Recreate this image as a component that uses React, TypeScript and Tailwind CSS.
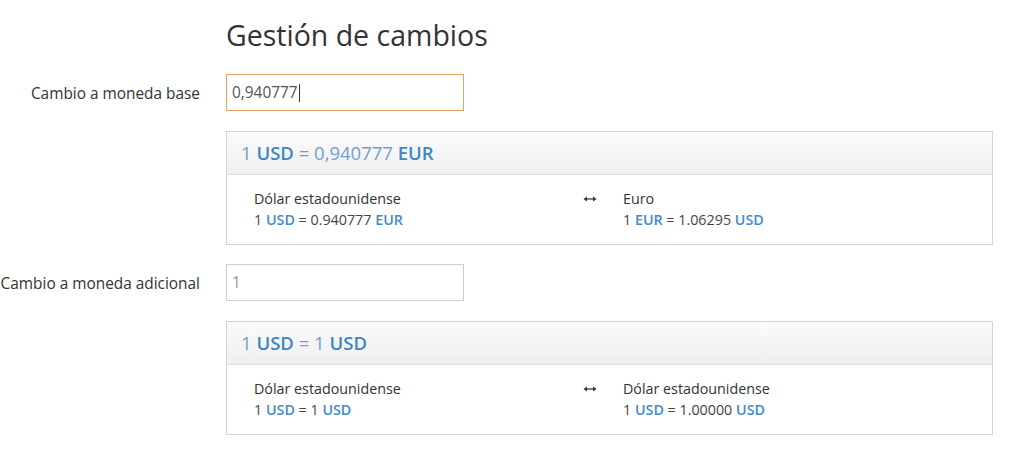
import React from "react";

const Arrow = () => (
  <svg width="14" height="8" viewBox="0 0 14 8" className="mt-[7px]">
    <path d="M0.5 4 L4 1.5 L4 6.5 Z" fill="#333" />
    <path d="M13.5 4 L10 1.5 L10 6.5 Z" fill="#333" />
    <rect x="3" y="3.4" width="8" height="1.2" fill="#333" />
  </svg>
);

const B = ({ children }: { children: React.ReactNode }) => (
  <span className="text-[#428bca] font-semibold">{children}</span>
);

const Panel = ({
  head,
  left,
  right,
}: {
  head: React.ReactNode;
  left: [string, React.ReactNode];
  right: [string, React.ReactNode];
}) => (
  <div className="border border-[#d4d4d4] bg-white">
    <div className="h-[43px] flex items-center pl-[14px] border-b border-[#dcdcdc] bg-gradient-to-b from-[#fbfbfb] to-[#efefef] text-[18.5px] text-[#6f9fce]">
      {head}
    </div>
    <div className="flex pl-[27px] pt-[13px] pb-[14px] text-[14.3px] leading-[21px] text-[#333]">
      <div className="w-[329px]">
        <div>{left[0]}</div>
        <div>{left[1]}</div>
      </div>
      <div className="w-[40px]">
        <Arrow />
      </div>
      <div>
        <div>{right[0]}</div>
        <div>{right[1]}</div>
      </div>
    </div>
  </div>
);

const Row = ({
  one,
  c1,
  val,
  c2,
}: {
  one: string;
  c1: string;
  val: string;
  c2: string;
}) => (
  <span className="text-[#444]">
    {one} <B>{c1}</B> = {val} <B>{c2}</B>
  </span>
);

const Head = ({ c1, val, c2 }: { c1: string; val: string; c2: string }) => (
  <span>
    1 <span className="font-semibold text-[#3f86c5]">{c1}</span> = {val}{" "}
    <span className="font-semibold text-[#3f86c5]">{c2}</span>
  </span>
);

export default function App() {
  return (
    <div
      className="w-[1017px] h-[453px] bg-white overflow-hidden"
      style={{ fontFamily: '"Open Sans", sans-serif' }}
    >
      <div className="pl-[226px] pt-[13px]">
        <h1 className="text-[28.5px] leading-[44px] text-[#333] font-normal">
          Gestión de cambios
        </h1>
      </div>
      <div className="flex items-center mt-[17px]">
        <div className="w-[200px] shrink-0 pt-[3px] text-right whitespace-nowrap text-[15.4px] text-[#333]">
          Cambio a moneda base
        </div>
        <div className="ml-[26px] w-[238px] h-[37px] border border-[#e8a25f] flex items-center pl-[5px] text-[15.4px] text-[#555]">
          0,940777
          <span className="inline-block w-px h-[18px] bg-[#333] ml-[1px]" />
        </div>
      </div>
      <div className="ml-[226px] w-[767px] mt-[20px]">
        <Panel
          head={<Head c1="USD" val="0,940777" c2="EUR" />}
          left={["Dólar estadounidense", <Row one="1" c1="USD" val="0.940777" c2="EUR" />]}
          right={["Euro", <Row one="1" c1="EUR" val="1.06295" c2="USD" />]}
        />
      </div>
      <div className="flex items-center mt-[19px]">
        <div className="w-[200px] shrink-0 pt-[3px] text-right whitespace-nowrap text-[15.4px] text-[#333]">
          Cambio a moneda adicional
        </div>
        <div className="ml-[26px] w-[238px] h-[37px] border border-[#cfcfcf] flex items-center pl-[5px] text-[15.4px] text-[#999]">
          1
        </div>
      </div>
      <div className="ml-[226px] w-[767px] mt-[20px]">
        <Panel
          head={<Head c1="USD" val="1" c2="USD" />}
          left={["Dólar estadounidense", <Row one="1" c1="USD" val="1" c2="USD" />]}
          right={["Dólar estadounidense", <Row one="1" c1="USD" val="1.00000" c2="USD" />]}
        />
      </div>
    </div>
  );
}
